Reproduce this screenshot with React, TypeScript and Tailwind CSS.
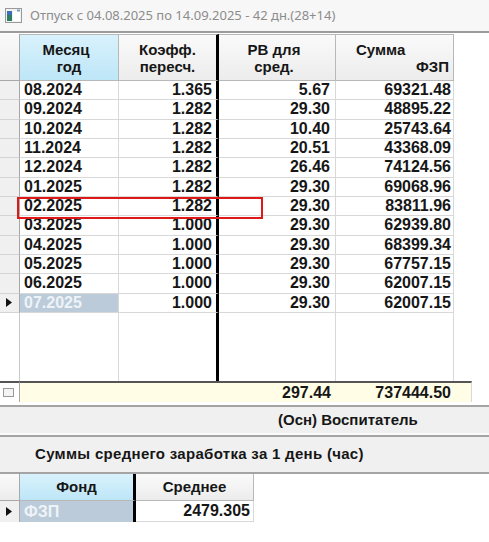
import React from "react";

// Строки основной таблицы: месяц, коэфф., РВ, сумма ФЗП
const rows: [string, string, string, string][] = [
  ["08.2024", "1.365", "5.67", "69321.48"],
  ["09.2024", "1.282", "29.30", "48895.22"],
  ["10.2024", "1.282", "10.40", "25743.64"],
  ["11.2024", "1.282", "20.51", "43368.09"],
  ["12.2024", "1.282", "26.46", "74124.56"],
  ["01.2025", "1.282", "29.30", "69068.96"],
  ["02.2025", "1.282", "29.30", "83811.96"],
  ["03.2025", "1.000", "29.30", "62939.80"],
  ["04.2025", "1.000", "29.30", "68399.34"],
  ["05.2025", "1.000", "29.30", "67757.15"],
  ["06.2025", "1.000", "29.30", "62007.15"],
  ["07.2025", "1.000", "29.30", "62007.15"],
];

function Arrow() {
  return (
    <svg width="6" height="9" viewBox="0 0 6 9" className="ml-[6px]">
      <polygon points="0,0 6,4.5 0,9" fill="#111" />
    </svg>
  );
}

function WinIcon() {
  return (
    <svg width="17" height="15" viewBox="0 0 17 15">
      <rect x="0.5" y="0.5" width="16" height="14" fill="#f2f2f2" stroke="#9a9a9a" />
      <rect x="2" y="3" width="5" height="10" fill="#2f7d62" />
      <rect x="2" y="3" width="5" height="4" fill="#3b6fb6" />
      <rect x="8" y="3" width="7" height="10" fill="#ffffff" />
      <rect x="12" y="1.5" width="3" height="2" fill="#7a9cc8" />
    </svg>
  );
}

const hdrGray = "bg-gradient-to-b from-[#fafafa] to-[#ececec]";
const hdrBlue = "bg-gradient-to-b from-[#d9f2fc] to-[#bde6f7]";

export default function App() {
  return (
    <div
      className="w-[489px] h-[542px] bg-white text-[#161616] overflow-hidden flex flex-col"
      style={{ fontFamily: '"Liberation Sans", Arial, sans-serif' }}
    >
      {/* заголовок окна */}
      <div className="h-[33px] shrink-0 bg-[#f7f7f7] border-b-2 border-[#9c9c9c] flex items-center pl-[5px] gap-[8px]">
        <WinIcon />
        <span
          className="text-[13px] text-[#8c8c8c]"
          style={{ fontFamily: '"Noto Sans", sans-serif' }}
        >
          Отпуск с 04.08.2025 по 14.09.2025 - 42 дн.(28+14)
        </span>
      </div>

      {/* основная таблица */}
      <div className="flex flex-col h-[369px] shrink-0 font-bold">
        {/* шапка */}
        <div className="flex h-[47px] shrink-0 text-[15px] leading-[17px] mt-[1px]">
          <div className={`w-[20px] border-r border-b border-[#a8a8a8] ${hdrGray}`} />
          <div className={`w-[99px] border-r border-b border-t border-[#b8b8b8] ${hdrBlue} flex flex-col items-center justify-center`}>
            <span className="-ml-[6px]">Месяц</span>
            <span>год</span>
          </div>
          <div className={`w-[100px] border-r-[3px] border-r-black border-b border-t border-[#b8b8b8] ${hdrGray} flex flex-col items-center justify-center`}>
            <span>Коэфф.</span>
            <span>пересч.</span>
          </div>
          <div className={`w-[117px] border-r border-b border-t border-[#b8b8b8] ${hdrGray} flex flex-col items-center justify-center`}>
            <span className="-ml-[6px]">РВ для</span>
            <span className="-ml-[6px]">сред.</span>
          </div>
          <div className={`w-[118px] border-r border-b border-t border-[#b8b8b8] ${hdrGray} flex flex-col justify-center`}>
            <span className="pl-[20px]">Сумма</span>
            <span className="text-right pr-[4px]">ФЗП</span>
          </div>
        </div>

        {/* строки */}
        <div className="relative text-[16px] leading-none">
          {rows.map((r, i) => {
            const last = i === rows.length - 1;
            return (
              <div key={r[0]} className="flex h-[19.33px]">
                <div className="w-[20px] bg-[#f0f0f0] border-r border-b border-r-[#a8a8a8] border-b-[#d4d4d4] flex items-center">
                  {last && <Arrow />}
                </div>
                <div
                  className={`w-[99px] border-r border-b border-[#d8d8d8] flex items-center pl-[4px] ${
                    last ? "bg-[#bccbd9] text-[#eef3f8]" : ""
                  }`}
                >
                  {r[0]}
                </div>
                <div className="w-[100px] border-r-[3px] border-r-black border-b border-b-[#d8d8d8] flex items-center justify-end pr-[4px]">
                  {r[1]}
                </div>
                <div className="w-[117px] border-r border-b border-[#d8d8d8] flex items-center justify-end pr-[5px]">
                  {r[2]}
                </div>
                <div className="w-[118px] border-r border-b border-[#d8d8d8] flex items-center justify-end pr-[2px]">
                  {r[3]}
                </div>
              </div>
            );
          })}
          {/* выделение строки 02.2025 */}
          <div className="absolute left-[17px] top-[116px] w-[246px] h-[22px] border-2 border-[#e01818]" />
        </div>

        {/* пустое место под строками */}
        <div className="flex flex-1">
          <div className="w-[20px] border-r border-[#c8c8c8]" />
          <div className="w-[99px] border-r border-[#d8d8d8]" />
          <div className="w-[100px] border-r-[3px] border-black" />
          <div className="w-[117px] border-r border-[#d8d8d8]" />
          <div className="w-[118px] border-r border-[#d8d8d8]" />
        </div>

        {/* итоги */}
        <div className="flex h-[21px] shrink-0 text-[16px] leading-none">
          <div className="w-[20px] border-t-2 border-t-[#555] border-r border-r-[#a8a8a8] flex items-center pl-[3px]">
            <div className="w-[11px] h-[9px] border border-[#9a9a9a] bg-[#f4f4f4]" />
          </div>
          <div className="w-[452px] border-t-2 border-t-[#555] border-r border-r-[#d8d8d8] bg-[#fffde6] flex items-center">
            <span className="w-[316px] text-right pr-[5px]">297.44</span>
            <span className="w-[118px] text-right pr-[3px]">737444.50</span>
          </div>
        </div>
      </div>

      {/* панель должности */}
      <div className="h-[3px] shrink-0" />
      <div className="h-[30px] shrink-0 bg-[#f0f0f0] border-t-2 border-[#a4a4a4] border-b-2 border-b-[#fafafa] flex items-center pl-[278px] font-bold text-[15px]">
        (Осн) Воспитатель
      </div>

      {/* панель среднего заработка */}
      <div className="h-[39px] shrink-0 bg-[#f0f0f0] border-t-2 border-[#a4a4a4] border-b-2 border-b-[#a4a4a4] flex items-center pl-[35px] font-bold text-[15px] tracking-[0.3px]">
        Суммы среднего заработка за 1 день (час)
      </div>

      {/* вторая таблица */}
      <div className="flex flex-col font-bold">
        <div className="flex h-[27px] text-[15px]">
          <div className={`w-[20px] border-r border-b border-[#a8a8a8] ${hdrGray}`} />
          <div className={`w-[116px] border-r-[3px] border-r-black border-b border-[#b8b8b8] ${hdrBlue} flex items-center justify-center`}>
            Фонд
          </div>
          <div className={`w-[118px] border-r border-b border-[#b8b8b8] ${hdrGray} flex items-center justify-center`}>
            Среднее
          </div>
        </div>
        <div className="flex h-[21px] text-[16px] leading-none">
          <div className="w-[20px] bg-[#f0f0f0] border-r border-[#a8a8a8] flex items-center">
            <Arrow />
          </div>
          <div className="w-[116px] border-r-[3px] border-r-black bg-[#bccbd9] text-[#eef3f8] flex items-center pl-[4px]">
            ФЗП
          </div>
          <div className="w-[118px] border-r border-b border-[#d8d8d8] flex items-center justify-end pr-[3px]">
            2479.305
          </div>
        </div>
      </div>
    </div>
  );
}
